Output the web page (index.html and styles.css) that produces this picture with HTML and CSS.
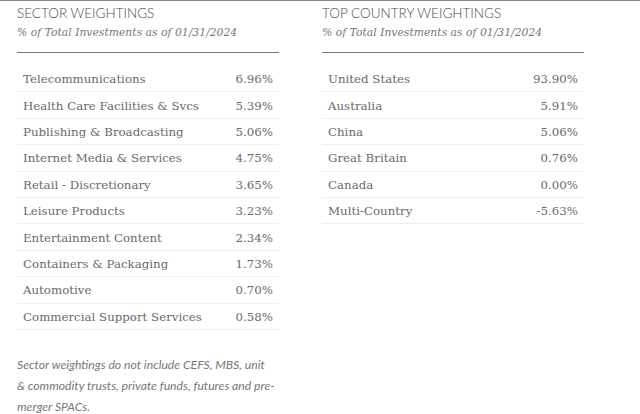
FILE: index.html
```html
<!DOCTYPE html>
<html>
<head>
<meta charset="utf-8">
<link rel="stylesheet" href="styles.css">
</head>
<body>
<div class="page">
  <section class="col">
    <h2 class="title">SECTOR WEIGHTINGS</h2>
    <p class="sub">% of Total Investments as of 01/31/2024</p>
    <table class="tbl">
      <tr><td>Telecommunications</td><td class="num">6.96%</td></tr>
      <tr><td>Health Care Facilities &amp; Svcs</td><td class="num">5.39%</td></tr>
      <tr><td>Publishing &amp; Broadcasting</td><td class="num">5.06%</td></tr>
      <tr><td>Internet Media &amp; Services</td><td class="num">4.75%</td></tr>
      <tr><td>Retail - Discretionary</td><td class="num">3.65%</td></tr>
      <tr><td>Leisure Products</td><td class="num">3.23%</td></tr>
      <tr><td>Entertainment Content</td><td class="num">2.34%</td></tr>
      <tr><td>Containers &amp; Packaging</td><td class="num">1.73%</td></tr>
      <tr><td>Automotive</td><td class="num">0.70%</td></tr>
      <tr><td>Commercial Support Services</td><td class="num">0.58%</td></tr>
    </table>
    <p class="note">Sector weightings do not include CEFS, MBS, unit<br>&amp; commodity trusts, private funds, futures and pre-merger SPACs.</p>
  </section>
  <section class="col">
    <h2 class="title">TOP COUNTRY WEIGHTINGS</h2>
    <p class="sub">% of Total Investments as of 01/31/2024</p>
    <table class="tbl">
      <tr><td>United States</td><td class="num">93.90%</td></tr>
      <tr><td>Australia</td><td class="num">5.91%</td></tr>
      <tr><td>China</td><td class="num">5.06%</td></tr>
      <tr><td>Great Britain</td><td class="num">0.76%</td></tr>
      <tr><td>Canada</td><td class="num">0.00%</td></tr>
      <tr><td>Multi-Country</td><td class="num">-5.63%</td></tr>
    </table>
  </section>
</div>
</body>
</html>
```
FILE: styles.css
```css
html, body { margin: 0; padding: 0; background: #fff; }
body { border-top: 1px solid #8a8a8a; }
.page {
  display: flex;
  gap: 43px;
  padding: 4px 0 0 17px;
}
.col { width: 262px; }
.title {
  margin: 0;
  font-family: "Lato", sans-serif;
  font-weight: 300;
  font-size: 13.5px;
  line-height: 17px;
  color: #4a4a4a;
}
.sub {
  margin: 2px 0 0;
  font-family: "DejaVu Serif", serif;
  font-style: italic;
  font-size: 10.8px;
  line-height: 17px;
  color: #777;
  padding-bottom: 11px;
  border-bottom: 1px solid #7a7a7a;
}
.tbl {
  margin-top: 13px;
  width: 100%;
  border-collapse: collapse;
  font-family: "DejaVu Serif", serif;
  font-size: 11.8px;
  color: #6a6a6a;
}
.tbl td {
  height: 24.4px;
  padding: 1px 6px 0;
  border-bottom: 1px solid #eeeeee;
}
.tbl .num { text-align: right; }
.note {
  margin: 24px 0 0;
  font-family: "Lato", sans-serif;
  font-style: italic;
  font-size: 12.2px;
  line-height: 21px;
  color: #777;
}
```
